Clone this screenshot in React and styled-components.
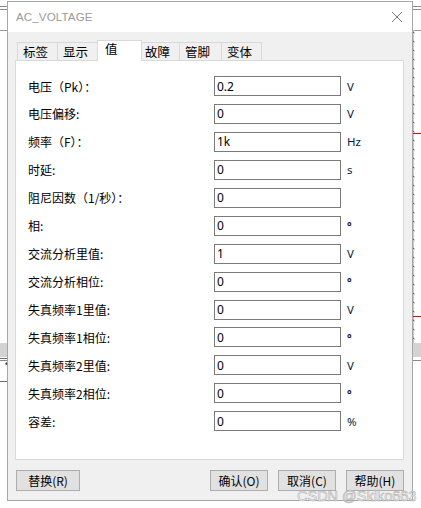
import React from 'react'
import styled, { createGlobalStyle } from 'styled-components'

const GlobalStyle = createGlobalStyle`
    html, body {
        margin: 0;
        padding: 0;
        background: #fff;
    }
    body {
        font-family: "Noto Sans CJK SC", "Noto Sans", sans-serif;
        font-size: 12px;
        color: #000;
    }
`;

// the schematic window behind the dialog
const Desktop = styled.div`
    position: relative;
    width: 421px;
    height: 508px;
    overflow: hidden;
    background: #fff;
    display: flex;
    flex-direction: column;
`;
const BgDouble = styled.div`
    margin-top: 6px;
    height: 2px;
    border-top: 1px solid #8a8a8a;
    border-bottom: 1px solid #8a8a8a;
`;
const BgLine = styled.div`
    margin-top: ${p => p.$gap}px;
    height: 0;
    border-top: 1px solid ${p => p.$color || '#9a9a9a'};
`;
const BgBand = styled.div`
    margin-top: ${p => p.$gap}px;
    height: 14px;
    background: #d3d3d3;
`;
const BgButton = styled.div`
    margin-top: 1px;
    width: 22px;
    margin-left: -14px;
    height: 22px;
    background: #fff;
    border: 1px solid #6b6b6b;
    border-radius: 2px;
    font-size: 10px;
    color: #224;
    display: flex;
    justify-content: flex-end;
    padding-right: 2px;
    line-height: 14px;
`;
const Grid = styled.svg`
    position: absolute;
    right: 0;
    top: 30px;
`;

const Dialog = styled.div`
    position: absolute;
    left: 7px;
    top: 1px;
    width: 406px;
    height: 500px;
    box-sizing: border-box;
    border: 1px solid #a6a6a6;
    background: #f0f0f0;
    display: flex;
    flex-direction: column;
`;
const TitleBar = styled.div`
    height: 30px;
    background: #fff;
    display: flex;
    align-items: center;
    justify-content: space-between;
    padding: 0 8px 0 8px;
`;
const Title = styled.span`
    font-family: "Liberation Sans", Arial, sans-serif;
    font-size: 11.6px;
    color: #9a9a9a;
    letter-spacing: 0.1px;
    margin-top: -1px;
`;
const Body = styled.div`
    flex: 1;
    padding: 8px 8px 0 7px;
    display: flex;
    flex-direction: column;
`;
const TabRow = styled.div`
    display: flex;
    align-items: flex-end;
    height: 20px;
    padding-left: 2px;
`;
const Tab = styled.div`
    position: relative;
    box-sizing: border-box;
    width: ${p => p.$w}px;
    height: ${p => p.$active ? 21 : 18}px;
    margin: ${p => p.$active ? '0 -2px -1px -2px' : '0'};
    padding-left: ${p => p.$active ? 7 : 5}px;
    background: ${p => p.$active ? '#fff' : '#f0f0f0'};
    border: 1px solid #d9d9d9;
    border-bottom: none;
    border-left-width: ${p => p.$first || p.$active ? 1 : 0}px;
    z-index: ${p => p.$active ? 1 : 0};
    font-size: 12.5px;
    line-height: ${p => p.$active ? 15 : 17}px;
`;
const Panel = styled.div`
    box-sizing: border-box;
    width: 389px;
    height: 400px;
    background: #fff;
    border: 1px solid #d9d9d9;
    padding: 15px 0 0 12px;
    display: grid;
    grid-template-columns: 186px 127px auto;
    grid-auto-rows: 20px;
    row-gap: 7.95px;
    align-items: center;
`;
const Label = styled.span`
    font-size: 12px;
    white-space: nowrap;
`;
const Field = styled.input`
    box-sizing: border-box;
    width: 127px;
    height: 20px;
    margin: 0;
    border: 1px solid #7a7a7a;
    padding: 0 2px;
    font-family: "Noto Sans", "Noto Sans CJK SC", sans-serif;
    font-size: 12px;
    color: #000;
    background: #fff;
    outline: none;
`;
const Unit = styled.span`
    padding-left: 6px;
    font-family: "Noto Sans", sans-serif;
    font-size: ${p => p.$small ? 11 : 11.5}px;
    font-weight: ${p => p.$small ? 700 : 400};
    color: #0c1a40;
`;
const ButtonRow = styled.div`
    display: flex;
    margin-top: 10px;
    padding-left: 1px;
    gap: 10px;
`;
const Button = styled.button`
    box-sizing: border-box;
    width: ${p => p.$w}px;
    height: 21px;
    margin: 0;
    margin-left: ${p => p.$push ? 'auto' : '0'};
    padding: 0;
    background: #e1e1e1;
    border: 1px solid #adadad;
    font-family: "Noto Sans CJK SC", sans-serif;
    font-size: 12px;
    color: #000;
    line-height: 17px;
`;
const Watermark = styled.div`
    position: absolute;
    left: 297px;
    top: 488px;
    font-family: "Liberation Sans", Arial, sans-serif;
    font-size: 14.5px;
    color: rgba(250, 250, 250, 0.85);
    -webkit-text-stroke: 0.5px #a6a6a6;
    white-space: nowrap;
    pointer-events: none;
`;

const rows = [
    ['电压（Pk）：', '0.2', 'V'],
    ['电压偏移:', '0', 'V'],
    ['频率（F）：', '1k', 'Hz'],
    ['时延:', '0', 's'],
    ['阻尼因数（1/秒）：', '0', ''],
    ['相:', '0', '°'],
    ['交流分析里值:', '1', 'V'],
    ['交流分析相位:', '0', '°'],
    ['失真频率1里值:', '0', 'V'],
    ['失真频率1相位:', '0', '°'],
    ['失真频率2里值:', '0', 'V'],
    ['失真频率2相位:', '0', '°'],
    ['容差:', '0', '%'],
];

const tabs = [
    ['标签', 41], ['显示', 41], ['值', 45], ['故障', 40], ['管脚', 42], ['变体', 40],
];

function CloseIcon() {
    return (
        <svg width="12" height="12" viewBox="0 0 12 12" style={{ marginRight: 1 }}>
            <path d="M1 1 L11 11 M11 1 L1 11" stroke="#7a7a7a" strokeWidth="1" />
        </svg>
    );
}

function GridMarks() {
    const ticks = [];
    for (let y = 2; y < 312; y += 9) ticks.push(y);
    return (
        <Grid width="8" height="315">
            <line x1="0.5" y1="0" x2="0.5" y2="313" stroke="#c8c8c8" />
            {ticks.map(y => <line key={y} x1="0" y1={y} x2="1.5" y2={y + 1} stroke="#555" />)}
            <line x1="0" y1="103.5" x2="8" y2="103.5" stroke="#e00" />
            <line x1="0" y1="286.5" x2="8" y2="286.5" stroke="#e00" />
        </Grid>
    );
}

function App() {
    return (
        <>
            <GlobalStyle />
            <Desktop>
                <BgDouble />
                <BgLine $gap={20} />
                <BgBand $gap={312} />
                <BgButton>*</BgButton>
                <BgLine $gap={-22} $color="#888" />
                <GridMarks />
                <Dialog>
                    <TitleBar>
                        <Title>AC_VOLTAGE</Title>
                        <CloseIcon />
                    </TitleBar>
                    <Body>
                        <TabRow>
                            {tabs.map(([name, w], i) => (
                                <Tab key={name} $w={w} $active={name === '值'} $first={i === 0}>{name}</Tab>
                            ))}
                        </TabRow>
                        <Panel>
                            {rows.map(([label, value, unit]) => (
                                <React.Fragment key={label}>
                                    <Label>{label}</Label>
                                    <Field defaultValue={value} />
                                    <Unit $small={unit === '°'}>{unit}</Unit>
                                </React.Fragment>
                            ))}
                        </Panel>
                        <ButtonRow>
                            <Button $w={64}>替换(R)</Button>
                            <Button $w={58} $push>确认(O)</Button>
                            <Button $w={58}>取消(C)</Button>
                            <Button $w={58}>帮助(H)</Button>
                        </ButtonRow>
                    </Body>
                </Dialog>
                <Watermark>CSDN @Skiko663</Watermark>
            </Desktop>
        </>
    )
}

export default App
